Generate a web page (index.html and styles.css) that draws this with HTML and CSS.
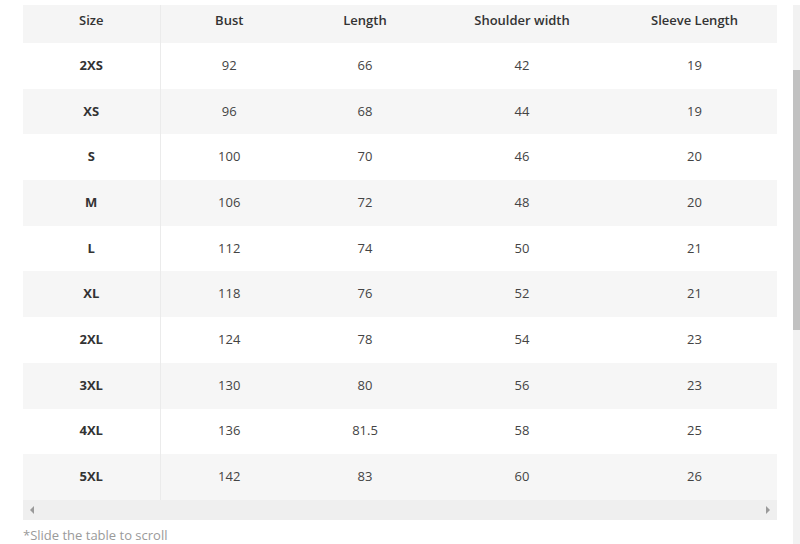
FILE: index.html
```html
<!DOCTYPE html>
<html lang="en">
<head>
<meta charset="utf-8">
<title>Size chart</title>
<link rel="stylesheet" href="styles.css">
</head>
<body>
<div class="chart">
  <table class="size-table">
    <colgroup>
      <col class="c1"><col class="c2"><col class="c3"><col class="c4"><col class="c5">
    </colgroup>
    <thead>
      <tr><th class="first">Size</th><th>Bust</th><th>Length</th><th>Shoulder width</th><th>Sleeve Length</th></tr>
    </thead>
    <tbody>
      <tr><td class="first">2XS</td><td>92</td><td>66</td><td>42</td><td>19</td></tr>
      <tr><td class="first">XS</td><td>96</td><td>68</td><td>44</td><td>19</td></tr>
      <tr><td class="first">S</td><td>100</td><td>70</td><td>46</td><td>20</td></tr>
      <tr><td class="first">M</td><td>106</td><td>72</td><td>48</td><td>20</td></tr>
      <tr><td class="first">L</td><td>112</td><td>74</td><td>50</td><td>21</td></tr>
      <tr><td class="first">XL</td><td>118</td><td>76</td><td>52</td><td>21</td></tr>
      <tr><td class="first">2XL</td><td>124</td><td>78</td><td>54</td><td>23</td></tr>
      <tr><td class="first">3XL</td><td>130</td><td>80</td><td>56</td><td>23</td></tr>
      <tr><td class="first">4XL</td><td>136</td><td>81.5</td><td>58</td><td>25</td></tr>
      <tr><td class="first">5XL</td><td>142</td><td>83</td><td>60</td><td>26</td></tr>
    </tbody>
  </table>
  <div class="hscroll">
    <span class="arrow left"></span>
    <span class="arrow right"></span>
  </div>
  <p class="note">*Slide the table to scroll</p>
</div>
<div class="vscroll"><div class="vthumb"></div></div>
</body>
</html>
```

FILE: styles.css
```css
html, body {
  margin: 0;
  padding: 0;
  background: #fff;
}
body {
  font-family: "Open Sans", "Lato", sans-serif;
  color: #333;
  position: relative;
  height: 544px;
  overflow: hidden;
}
.chart {
  padding: 5px 0 0 23px;
  width: 754px;
}
.size-table {
  border-collapse: collapse;
  table-layout: fixed;
  width: 754px;
  font-size: 13px;
}
.c1 { width: 137px; }
.c2 { width: 138px; }
.c3 { width: 134px; }
.c4 { width: 180px; }
.c5 { width: 165px; }
.size-table th,
.size-table td {
  text-align: center;
  padding: 0;
}
.size-table th {
  height: 38px;
  box-sizing: border-box;
  padding-bottom: 8px;
  font-weight: 600;
  color: #333;
  background: #f5f5f5;
}
.size-table td {
  height: 45.7px;
  box-sizing: border-box;
  padding-bottom: 2px;
  color: #444;
}
.size-table td.first {
  font-weight: 700;
  color: #333;
}
.size-table .first {
  border-right: 1px solid #ebebeb;
}
.size-table tbody tr:nth-child(even) {
  background: #f6f6f6;
}
.hscroll {
  height: 20px;
  background: #efefef;
  display: flex;
  align-items: center;
  justify-content: space-between;
  padding: 0 7px;
}
.arrow {
  width: 0;
  height: 0;
  border-top: 4px solid transparent;
  border-bottom: 4px solid transparent;
}
.arrow.left { border-right: 4px solid #9a9a9a; }
.arrow.right { border-left: 4px solid #9a9a9a; }
.note {
  margin: 6px 0 0;
  font-size: 13px;
  color: #9a9a9a;
}
.vscroll {
  position: absolute;
  top: 5px;
  right: 0;
  bottom: 0;
  width: 7px;
  background: #f2f2f2;
}
.vthumb {
  position: absolute;
  top: 65px;
  left: 0;
  width: 7px;
  height: 260px;
  background: #c1c1c1;
}
```
